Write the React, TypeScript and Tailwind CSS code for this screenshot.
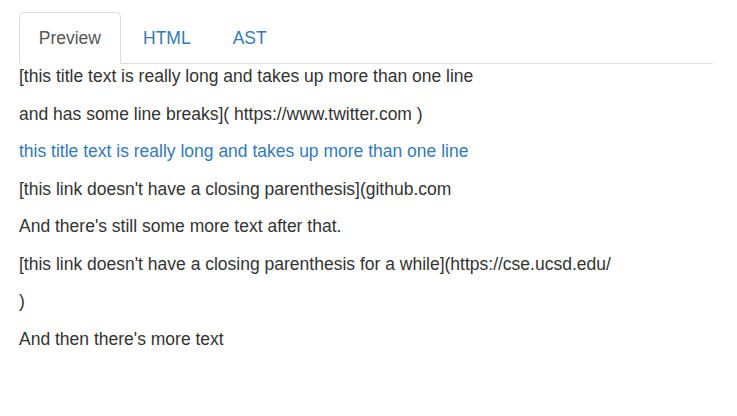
import { useState } from "react";

const tabs = ["Preview", "HTML", "AST"];

// Rendered markdown preview lines
const lines: { text: string; link?: boolean }[] = [
  { text: "[this title text is really long and takes up more than one line" },
  { text: "and has some line breaks]( https://www.twitter.com )" },
  { text: "this title text is really long and takes up more than one line", link: true },
  { text: "[this link doesn't have a closing parenthesis](github.com" },
  { text: "And there's still some more text after that." },
  { text: "[this link doesn't have a closing parenthesis for a while](https://cse.ucsd.edu/" },
  { text: ")" },
  { text: "And then there's more text" },
];

const App: React.FC = () => {
  const [active, setActive] = useState("Preview");

  return (
    <div className="min-h-screen bg-white font-['Liberation_Sans',Arial,sans-serif] text-[17.5px] text-[#333]">
      <div className="ml-[19px] w-[694px] pt-[12px]">
        {/* Tabs */}
        <ul className="flex border-b border-[#ddd]">
          {tabs.map((t) => (
            <li key={t} className="mr-[2.5px] -mb-px">
              <button
                onClick={() => setActive(t)}
                className={
                  t === active
                    ? "py-[12.5px] px-[18.75px] rounded-t-[5px] border border-[#ddd] border-b-white bg-white text-[#555] leading-[25px]"
                    : "py-[12.5px] px-[18.75px] rounded-t-[5px] border border-transparent text-[#337ab7] leading-[25px]"
                }
              >
                {t}
              </button>
            </li>
          ))}
        </ul>

        {/* Preview content */}
        <div>
          {lines.map((l, i) => (
            <p key={i} className="leading-[25px] mb-[12.5px] whitespace-nowrap">
              {l.link ? (
                <a href="#" className="text-[#337ab7]">
                  {l.text}
                </a>
              ) : (
                l.text
              )}
            </p>
          ))}
        </div>
      </div>
    </div>
  );
};

export default App;
